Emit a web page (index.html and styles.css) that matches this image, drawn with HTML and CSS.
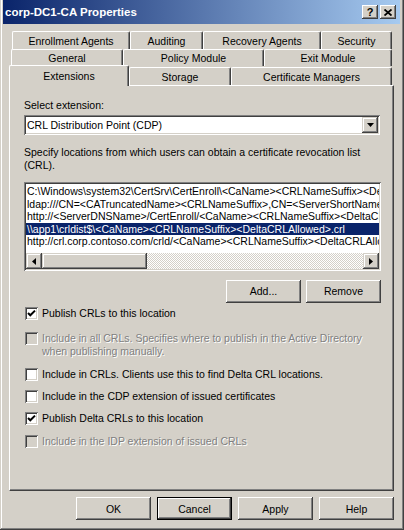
FILE: index.html
```html
<!DOCTYPE html>
<html>
<head>
<meta charset="utf-8">
<link rel="stylesheet" href="styles.css">
</head>
<body>
<div class="window">
  <div class="titlebar">
    <span class="title">corp-DC1-CA Properties</span>
    <div class="caption-btns">
      <span class="cap-btn help">?</span>
      <span class="cap-btn close">
        <svg width="8" height="7" viewBox="0 0 8 7"><path d="M0.5 0.5 L7.5 6.5 M7.5 0.5 L0.5 6.5" stroke="#000" stroke-width="1.8" fill="none"/></svg>
      </span>
    </div>
  </div>
  <div class="client">
    <div class="tabs">
      <div class="tab-row row1">
        <div class="tab w-enroll">Enrollment Agents</div>
        <div class="tab w-audit">Auditing</div>
        <div class="tab w-recov">Recovery Agents</div>
        <div class="tab w-sec">Security</div>
      </div>
      <div class="tab-row row2">
        <div class="tab w-gen">General</div>
        <div class="tab w-policy">Policy Module</div>
        <div class="tab w-exit">Exit Module</div>
      </div>
      <div class="tab-row row3">
        <div class="tab selected w-ext">Extensions</div>
        <div class="tab w-stor">Storage</div>
        <div class="tab w-cert">Certificate Managers</div>
      </div>
    </div>
    <div class="panel">
      <div class="label">Select extension:</div>
      <div class="combo">
        <span class="combo-text">CRL Distribution Point (CDP)</span>
        <span class="combo-btn">
          <svg width="7" height="4" viewBox="0 0 7 4"><polygon points="0,0 7,0 3.5,4" fill="#000"/></svg>
        </span>
      </div>
      <div class="desc">Specify locations from which users can obtain a certificate revocation list<br>(CRL).</div>
      <div class="listbox">
        <div class="items">
          <div class="item">C:\Windows\system32\CertSrv\CertEnroll\&lt;CaName&gt;&lt;CRLNameSuffix&gt;&lt;DeltaCRLAllowed&gt;.crl</div>
          <div class="item">ldap:///CN=&lt;CATruncatedName&gt;&lt;CRLNameSuffix&gt;,CN=&lt;ServerShortName&gt;,CN=CDP,CN=Public Key Services,CN=Services,&lt;ConfigurationContainer&gt;</div>
          <div class="item">http://&lt;ServerDNSName&gt;/CertEnroll/&lt;CaName&gt;&lt;CRLNameSuffix&gt;&lt;DeltaCRLAllowed&gt;.crl</div>
          <div class="item sel">\\app1\crldist$\&lt;CaName&gt;&lt;CRLNameSuffix&gt;&lt;DeltaCRLAllowed&gt;.crl</div>
          <div class="item">http://crl.corp.contoso.com/crld/&lt;CaName&gt;&lt;CRLNameSuffix&gt;&lt;DeltaCRLAllowed&gt;.crl</div>
        </div>
        <div class="hscroll">
          <span class="sb-btn">
            <svg width="4" height="7" viewBox="0 0 4 7"><polygon points="4,0 4,7 0,3.5" fill="#000"/></svg>
          </span>
          <span class="sb-thumb"></span>
          <span class="sb-track"></span>
          <span class="sb-btn">
            <svg width="4" height="7" viewBox="0 0 4 7"><polygon points="0,0 0,7 4,3.5" fill="#000"/></svg>
          </span>
        </div>
      </div>
      <div class="btn-row">
        <div class="btn">Add...</div>
        <div class="btn">Remove</div>
      </div>
      <div class="options">
        <div class="opt mt4">
          <span class="box"><svg width="9" height="9" viewBox="0 0 9 9"><polyline points="1,4 3.3,6.3 8,1.6" stroke="#000" stroke-width="2" fill="none"/></svg></span>
          <span class="opt-text">Publish CRLs to this location</span>
        </div>
        <div class="opt disabled mt12">
          <span class="box"></span>
          <span class="opt-text">Include in all CRLs. Specifies where to publish in the Active Directory<br>when publishing manually.</span>
        </div>
        <div class="opt mt10">
          <span class="box"></span>
          <span class="opt-text">Include in CRLs. Clients use this to find Delta CRL locations.</span>
        </div>
        <div class="opt mt9">
          <span class="box"></span>
          <span class="opt-text">Include in the CDP extension of issued certificates</span>
        </div>
        <div class="opt mt9">
          <span class="box"><svg width="9" height="9" viewBox="0 0 9 9"><polyline points="1,4 3.3,6.3 8,1.6" stroke="#000" stroke-width="2" fill="none"/></svg></span>
          <span class="opt-text">Publish Delta CRLs to this location</span>
        </div>
        <div class="opt disabled mt10">
          <span class="box"></span>
          <span class="opt-text">Include in the IDP extension of issued CRLs</span>
        </div>
      </div>
    </div>
    <div class="dialog-buttons">
      <div class="btn">OK</div>
      <div class="btn default">Cancel</div>
      <div class="btn">Apply</div>
      <div class="btn">Help</div>
    </div>
  </div>
</div>
</body>
</html>
```

FILE: styles.css
```css
html, body {
  margin: 0;
  padding: 0;
  background: #d4d0c8;
}

body {
  font-family: "Liberation Sans", Arial, sans-serif;
  font-size: 10.5px;
  color: #000;
}

.window {
  width: 404px;
  height: 530px;
  box-sizing: border-box;
  padding: 0 4px 4px 3px;
  background: #d4d0c8;
  box-shadow: inset -1px -1px 0 #404040, inset 1px 0 0 #d4d0c8, inset -2px -2px 0 #808080, inset 2px 0 0 #ffffff;
}

.titlebar {
  height: 24px;
  display: flex;
  align-items: center;
  justify-content: space-between;
  background: linear-gradient(to right, #0a246a, #a6caf0);
  padding: 0 4px 0 2px;
}

.title {
  color: #fff;
  font-weight: bold;
  font-size: 11.5px;
}

.caption-btns {
  display: flex;
  gap: 2px;
}

.cap-btn {
  width: 16px;
  height: 14px;
  box-sizing: border-box;
  display: flex;
  align-items: center;
  justify-content: center;
  background: #d4d0c8;
  box-shadow: inset -1px -1px 0 #404040, inset 1px 1px 0 #fff, inset -2px -2px 0 #808080;
}

.cap-btn.help {
  font-weight: bold;
  font-size: 11px;
  line-height: 14px;
}

.client {
  padding: 7px 0 0 6px;
  width: 385px;
}

.tab-row {
  display: flex;
  align-items: flex-end;
}

.row1 { height: 18px; margin-left: 3px; }
.row2 { height: 17px; margin-left: 2px; }
.row3 { height: 19px; }

.tab {
  box-sizing: border-box;
  height: 100%;
  display: flex;
  align-items: center;
  justify-content: center;
  background: #d4d0c8;
  border-top: 1px solid #fff;
  border-left: 1px solid #fff;
  border-right: 1px solid #404040;
  border-radius: 2px 2px 0 0;
  box-shadow: inset -1px 0 0 #808080;
  white-space: nowrap;
}

.row3 .tab { height: 18px; }

.row3 .tab.selected {
  height: 21px;
  margin-bottom: -1px;
  position: relative;
  z-index: 1;
}

.w-enroll { width: 118px; }
.w-audit { width: 73px; }
.w-recov { width: 118px; }
.w-sec { width: 71px; }
.w-gen { width: 112px; }
.w-policy { width: 141px; }
.w-exit { width: 128px; }
.w-ext { width: 120px; }
.w-stor { width: 102px; }
.w-cert { width: 161px; }

.panel {
  height: 406px;
  box-sizing: border-box;
  border-top: 1px solid #fff;
  border-left: 1px solid #fff;
  border-right: 1px solid #404040;
  border-bottom: 1px solid #404040;
  box-shadow: inset -1px -1px 0 #808080;
  padding: 13px 12px 0 14px;
  line-height: 13px;
}

.label {
  white-space: nowrap;
}

.sunken {
  box-shadow: inset 1px 1px 0 #808080, inset -1px -1px 0 #fff, inset 2px 2px 0 #404040, inset -2px -2px 0 #d4d0c8;
}

.combo {
  margin-top: 3px;
  width: 356px;
  height: 20px;
  box-sizing: border-box;
  padding: 2px;
  background: #fff;
  display: flex;
  align-items: center;
  box-shadow: inset 1px 1px 0 #808080, inset -1px -1px 0 #fff, inset 2px 2px 0 #404040, inset -2px -2px 0 #d4d0c8;
}

.combo-text {
  flex: 1;
  padding-left: 1px;
}

.combo-btn {
  width: 16px;
  height: 16px;
  box-sizing: border-box;
  display: flex;
  align-items: center;
  justify-content: center;
  background: #d4d0c8;
  box-shadow: inset -1px -1px 0 #404040, inset 1px 1px 0 #d4d0c8, inset -2px -2px 0 #808080, inset 2px 2px 0 #fff;
}

.desc {
  margin-top: 11px;
  white-space: nowrap;
}

.listbox {
  margin-top: 10px;
  width: 357px;
  height: 89px;
  box-sizing: border-box;
  padding: 2px;
  background: #fff;
  display: flex;
  flex-direction: column;
  box-shadow: inset 1px 1px 0 #808080, inset -1px -1px 0 #fff, inset 2px 2px 0 #404040, inset -2px -2px 0 #d4d0c8;
}

.items {
  flex: 1;
  overflow: hidden;
  padding-top: 1px;
}

.item {
  line-height: 12.5px;
  height: 12.5px;
  white-space: nowrap;
  padding-left: 1px;
}

.item.sel {
  background: #0a246a;
  color: #fff;
}

.hscroll {
  height: 16px;
  display: flex;
}

.sb-btn {
  width: 16px;
  height: 16px;
  box-sizing: border-box;
  display: flex;
  align-items: center;
  justify-content: center;
  background: #d4d0c8;
  box-shadow: inset -1px -1px 0 #404040, inset 1px 1px 0 #d4d0c8, inset -2px -2px 0 #808080, inset 2px 2px 0 #fff;
}

.sb-thumb {
  width: 105px;
  height: 16px;
  box-sizing: border-box;
  background: #d4d0c8;
  box-shadow: inset -1px -1px 0 #404040, inset 1px 1px 0 #d4d0c8, inset -2px -2px 0 #808080, inset 2px 2px 0 #fff;
}

.sb-track {
  flex: 1;
  background: repeating-conic-gradient(#ffffff 0 25%, #d4d0c8 0 50%) 0 0 / 2px 2px;
}

.btn {
  width: 75px;
  height: 23px;
  box-sizing: border-box;
  display: flex;
  align-items: center;
  justify-content: center;
  background: #d4d0c8;
  box-shadow: inset -1px -1px 0 #404040, inset 1px 1px 0 #fff, inset -2px -2px 0 #808080, inset 2px 2px 0 #d4d0c8;
}

.btn.default {
  box-shadow: inset 0 0 0 1px #000, inset -2px -2px 0 #404040, inset 2px 2px 0 #fff, inset -3px -3px 0 #808080;
}

.btn-row {
  margin-top: 9px;
  display: flex;
  justify-content: flex-end;
  gap: 5px;
  width: 357px;
}

.options {
  display: flex;
  flex-direction: column;
}

.opt {
  display: flex;
  align-items: flex-start;
  line-height: 13px;
}

.mt4 { margin-top: 4px; }
.mt9 { margin-top: 9px; }
.mt10 { margin-top: 10px; }
.mt12 { margin-top: 12px; }

.box {
  width: 13px;
  height: 13px;
  flex: none;
  box-sizing: border-box;
  margin-left: 1px;
  display: flex;
  align-items: center;
  justify-content: center;
  background: #fff;
  box-shadow: inset 1px 1px 0 #808080, inset -1px -1px 0 #fff, inset 2px 2px 0 #404040, inset -2px -2px 0 #d4d0c8;
}

.opt-text {
  margin-left: 4px;
  white-space: nowrap;
}

.opt.disabled .box {
  background: #d4d0c8;
}

.opt.disabled .opt-text {
  color: #808080;
  text-shadow: 1px 1px 0 #fff;
}

.dialog-buttons {
  margin-top: 6px;
  display: flex;
  justify-content: flex-end;
  gap: 6px;
}
```
